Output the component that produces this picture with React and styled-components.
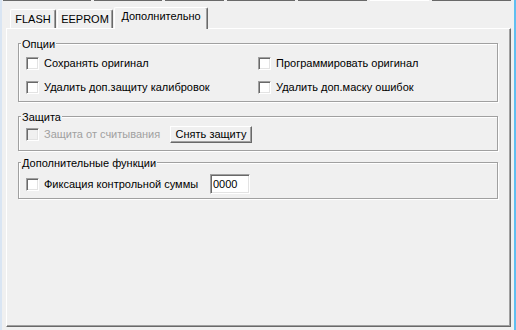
import React from "react";
import styled, { createGlobalStyle } from "styled-components";

const GlobalStyle = createGlobalStyle`
  html, body {
    margin: 0;
    padding: 0;
    background: #f0f0f0;
  }
  body {
    font-family: "Liberation Sans", Arial, sans-serif;
    font-size: 11px;
    color: #000;
  }
`;

const Window = styled.div`
  width: 516px;
  height: 330px;
  box-sizing: border-box;
  border-left: 2px solid #d9e5f3;
  border-right: 2px solid #5fbff0;
  background: #f0f0f0;
  display: flex;
  flex-direction: column;
  overflow: hidden;
`;

const ButtonStrip = styled.div`
  display: flex;
  gap: 3px;
  padding-left: 1px;
  height: 2px;
`;

const StripButton = styled.div`
  width: ${(p) => p.w}px;
  height: 1px;
  background: ${(p) => (p.active ? "#ffffff" : "#696969")};
`;

const TabRow = styled.div`
  display: flex;
  align-items: flex-end;
  height: 21px;
  margin-top: 5px;
  padding-left: 6px;
  position: relative;
  z-index: 1;
`;

const Tab = styled.div`
  box-sizing: border-box;
  width: ${(p) => p.w}px;
  height: ${(p) => (p.selected ? 22 : 19)}px;
  margin-left: ${(p) => p.ml}px;
  margin-bottom: ${(p) => (p.selected ? -1 : 0)}px;
  padding-top: ${(p) => (p.selected ? 2 : 3)}px;
  border-top: 1px solid #ffffff;
  border-left: 1px solid #ffffff;
  border-right: 1px solid #696969;
  border-top-left-radius: 2px;
  border-top-right-radius: 2px;
  box-shadow: inset -1px 0 0 #a0a0a0;
  background: #f0f0f0;
  line-height: 13px;
  text-align: center;
  white-space: nowrap;
`;

const Panel = styled.div`
  box-sizing: border-box;
  height: 299px;
  margin: 0 3px 0 4px;
  padding: 14px 12px 0 11px;
  border-top: 1px solid #ffffff;
  border-left: 1px solid #ffffff;
  border-right: 1px solid #696969;
  border-bottom: 1px solid #696969;
  box-shadow: inset -1px -1px 0 #a0a0a0;
  display: flex;
  flex-direction: column;
`;

const Group = styled.div`
  position: relative;
  border: 1px solid #a0a0a0;
  box-shadow: inset 1px 1px 0 #ffffff, 1px 1px 0 #ffffff;
  margin-top: ${(p) => p.mt || 0}px;
  padding: ${(p) => p.pad};
`;

const Caption = styled.span`
  position: absolute;
  top: -6px;
  left: 2px;
  padding: 0 1px;
  line-height: 13px;
  background: #f0f0f0;
`;

const OptionsGrid = styled.div`
  display: grid;
  grid-template-columns: 232px 1fr;
  row-gap: 11px;
`;

const Line = styled.div`
  display: flex;
  align-items: center;
`;

const Check = styled.label`
  display: flex;
  align-items: flex-start;
  width: ${(p) => (p.w ? `${p.w}px` : "auto")};
  height: 13px;
  color: ${(p) => (p.disabled ? "#a0a0a0" : "#000")};
  white-space: nowrap;
`;

const Box = styled.span`
  box-sizing: border-box;
  flex: none;
  width: 13px;
  height: 13px;
  margin-right: 5px;
  border-top: 1px solid #a0a0a0;
  border-left: 1px solid #a0a0a0;
  border-right: 1px solid #ffffff;
  border-bottom: 1px solid #ffffff;
  box-shadow: inset 1px 1px 0 #696969, inset -1px -1px 0 #e3e3e3;
  background: ${(p) => (p.disabled ? "#f0f0f0" : "#ffffff")};
`;

const Text = styled.span`
  line-height: 12px;
`;

const Button = styled.button`
  box-sizing: border-box;
  width: 82px;
  height: 17px;
  padding: 0;
  font: inherit;
  color: #000;
  line-height: 13px;
  background: #f0f0f0;
  border-top: 1px solid #ffffff;
  border-left: 1px solid #ffffff;
  border-right: 1px solid #696969;
  border-bottom: 1px solid #696969;
  box-shadow: inset -1px -1px 0 #a0a0a0;
  border-radius: 0;
`;

const Field = styled.input`
  box-sizing: border-box;
  width: 40px;
  height: 20px;
  padding: 0 0 0 2px;
  font: inherit;
  color: #000;
  background: #ffffff;
  border-top: 1px solid #a0a0a0;
  border-left: 1px solid #a0a0a0;
  border-right: 1px solid #ffffff;
  border-bottom: 1px solid #ffffff;
  box-shadow: inset 1px 1px 0 #696969, inset -1px -1px 0 #e3e3e3;
  outline: none;
`;

const strip = [
  { w: 88 },
  { w: 68 },
  { w: 59 },
  { w: 68 },
  { w: 69 },
  { w: 59, active: true },
  { w: 79 },
];

const CheckItem = ({ label, w, disabled }) => (
  <Check w={w} disabled={disabled}>
    <Box disabled={disabled} />
    <Text>{label}</Text>
  </Check>
);

export default function App() {
  return (
    <>
      <GlobalStyle />
      <Window>
        <ButtonStrip>
          {strip.map((s, i) => (
            <StripButton key={i} w={s.w} active={s.active} />
          ))}
        </ButtonStrip>
        <TabRow>
          <Tab w={46} ml={2}>FLASH</Tab>
          <Tab w={56} ml={1}>EEPROM</Tab>
          <Tab w={94} ml={1} selected>
            Дополнительно
          </Tab>
        </TabRow>
        <Panel>
          <Group pad="13px 0 7px 7px">
            <Caption>Опции</Caption>
            <OptionsGrid>
              <CheckItem label="Сохранять оригинал" />
              <CheckItem label="Программировать оригинал" />
              <CheckItem label="Удалить доп.защиту калибровок" />
              <CheckItem label="Удалить доп.маску ошибок" />
            </OptionsGrid>
          </Group>
          <Group mt={14} pad="9px 0 7px 7px">
            <Caption>Защита</Caption>
            <Line>
              <CheckItem label="Защита от считывания" w={144} disabled />
              <Button>Снять защиту</Button>
            </Line>
          </Group>
          <Group mt={11} pad="11px 0 4px 7px">
            <Caption>Дополнительные функции</Caption>
            <Line>
              <CheckItem label="Фиксация контрольной суммы" w={184} />
              <Field defaultValue="0000" />
            </Line>
          </Group>
        </Panel>
      </Window>
    </>
  );
}
